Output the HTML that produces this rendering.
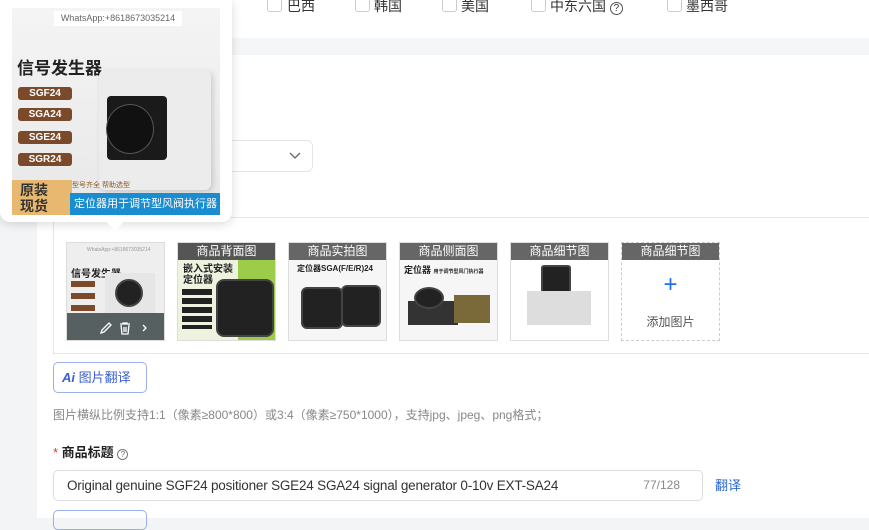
<!DOCTYPE html>
<html><head><meta charset="utf-8"><style>
*{box-sizing:border-box;margin:0;padding:0}
body{width:869px;height:518px;overflow:hidden;background:#f3f4f6;font-family:"Liberation Sans","Noto Sans CJK SC",sans-serif;position:relative;color:#333}
.abs{position:absolute}
.top{left:0;top:0;width:869px;height:38px;background:#fff}
.band{left:0;top:38px;width:869px;height:17px;background:#f4f6f8}
.card{left:37px;top:55px;width:832px;height:463px;background:#fff}
.cb{top:-3px;width:15px;height:15px;border:1px solid #ccc;border-radius:3px;background:#fff}
.cbt{top:-4px;font-size:14px;color:#333}
.sel{left:150px;top:140px;width:163px;height:32px;border:1px solid #e3e5e8;border-radius:6px;background:#fff}
.imgbox{left:53px;top:217px;width:816px;height:137px;border:1px solid #e6e6e6;border-right:none}
.th{top:242px;width:99px;height:99px;border:1px solid #ddd;background:#f2f2f2;overflow:hidden}
.lab{position:absolute;left:0;top:0;width:100%;height:17px;background:#666;color:#fff;font-size:12px;text-align:center;line-height:17px}
.dial{position:absolute;border-radius:50%;background:#222;border:2px solid #444}
</style></head><body>
<div class="abs top"></div>
<div class="abs cb" style="left:267px"></div><div class="abs cbt" style="left:287px">巴西</div>
<div class="abs cb" style="left:355px"></div><div class="abs cbt" style="left:374px">韩国</div>
<div class="abs cb" style="left:442px"></div><div class="abs cbt" style="left:461px">美国</div>
<div class="abs cb" style="left:531px"></div><div class="abs cbt" style="left:550px">中东六国 <span style="display:inline-block;width:13px;height:13px;border:1px solid #555;border-radius:50%;font-size:10px;line-height:11px;text-align:center">?</span></div>
<div class="abs cb" style="left:667px"></div><div class="abs cbt" style="left:686px">墨西哥</div>
<div class="abs band"></div>
<div class="abs card"></div>
<div class="abs sel"><svg class="abs" style="left:138px;top:11px" width="12" height="8"><path d="M1 1l5 5 5-5" stroke="#666" fill="none" stroke-width="1.3"/></svg></div>
<div class="abs imgbox"></div>

<div class="abs th" style="left:66px;background:#eee">
 <div style="position:absolute;left:20px;top:4px;font-size:5px;color:#999">WhatsApp:+8618673035214</div>
 <div style="position:absolute;left:4px;top:22px;font-size:10px;font-weight:bold;color:#222">信号发生器</div>
 <div style="position:absolute;left:4px;top:38px;width:24px;height:6px;background:#7a4a2a"></div>
 <div style="position:absolute;left:4px;top:50px;width:24px;height:6px;background:#7a4a2a"></div>
 <div style="position:absolute;left:4px;top:62px;width:24px;height:6px;background:#7a4a2a"></div>
 <div style="position:absolute;left:38px;top:30px;width:50px;height:45px;background:#e6e6e6"></div>
 <div class="dial" style="left:48px;top:36px;width:28px;height:28px"></div>
 <div style="position:absolute;left:0;top:70px;width:99px;height:29px;background:rgba(60,70,70,.85)"></div>
 <svg style="position:absolute;left:32px;top:78px" width="50" height="14"><path d="M2 12l1-3 7-7 2 2-7 7z" stroke="#fff" fill="none" stroke-width="1.3"/><path d="M21 3h10M24 3v-1h4v1M22 4l1 9h6l1-9M25 6v5M27 6v5" stroke="#fff" fill="none" stroke-width="1.3"/><path d="M44 4l3 3-3 3" stroke="#fff" fill="none" stroke-width="1.3"/></svg>
</div>
<div class="abs th" style="left:177px;background:#9ccc4a"><div class="lab" style="background:#555">商品背面图</div>
 <div style="position:absolute;left:0;top:17px;width:60px;height:82px;background:#eef3e0"></div>
 <div style="position:absolute;left:5px;top:21px;font-size:10px;font-weight:bold;color:#222;line-height:11px">嵌入式安装<br>定位器</div>
 <div style="position:absolute;left:4px;top:46px;width:30px;height:40px;background:repeating-linear-gradient(#222 0 6px,transparent 6px 9px)"></div>
 <div class="dial" style="left:38px;top:36px;width:58px;height:58px;border-radius:8px"></div></div>
<div class="abs th" style="left:288px;background:#f6f6f6"><div class="lab">商品实拍图</div>
 <div style="position:absolute;left:8px;top:20px;font-size:8px;font-weight:bold;color:#222">定位器SGA(F/E/R)24</div>
 <div class="dial" style="left:12px;top:44px;width:42px;height:42px;border-radius:6px"></div>
 <div class="dial" style="left:52px;top:42px;width:40px;height:42px;border-radius:6px"></div></div>
<div class="abs th" style="left:399px;background:#f6f6f6"><div class="lab">商品侧面图</div>
 <div style="position:absolute;left:4px;top:20px;font-size:9px;font-weight:bold;color:#222">定位器 <span style="font-size:5px">用于调节型风门执行器</span></div>
 <div style="position:absolute;left:8px;top:58px;width:50px;height:24px;background:#333"></div>
 <div class="dial" style="left:14px;top:44px;width:30px;height:22px"></div>
 <div style="position:absolute;left:54px;top:52px;width:36px;height:28px;background:#7a6a3a"></div></div>
<div class="abs th" style="left:510px;background:#fff"><div class="lab">商品细节图</div>
 <div class="dial" style="left:30px;top:22px;width:30px;height:30px;border-radius:3px"></div>
 <div style="position:absolute;left:16px;top:48px;width:64px;height:34px;background:#ddd"></div></div>
<div class="abs th" style="left:621px;background:#fff;border:1px dashed #ccc"><div class="lab">商品细节图</div>
 <div style="position:absolute;left:0;top:30px;width:100%;text-align:center;color:#1a73e8;font-size:24px;line-height:24px">+</div>
 <div style="position:absolute;left:0;top:70px;width:100%;text-align:center;color:#555;font-size:12px">添加图片</div></div>

<div class="abs" style="left:53px;top:362px;width:94px;height:31px;border:1px solid #9bb0e6;border-radius:5px;font-size:13px;color:#3a5fcf;line-height:29px;padding-left:8px"><b style="font-style:italic">Ai</b> 图片翻译</div>
<div class="abs" style="left:53px;top:406px;font-size:12px;color:#888">图片横纵比例支持1:1（像素≥800*800）或3:4（像素≥750*1000），支持jpg、jpeg、png格式；</div>
<div class="abs" style="left:53px;top:442px;font-size:13px;color:#222;font-weight:bold"><span style="color:#e33;font-weight:normal">*</span> 商品标题 <span style="display:inline-block;width:11px;height:11px;border:1px solid #777;border-radius:50%;font-size:8px;line-height:9px;text-align:center;font-weight:normal;color:#666">?</span></div>
<div class="abs" style="left:53px;top:470px;width:650px;height:31px;border:1px solid #ddd;border-radius:5px;font-size:13.5px;letter-spacing:-0.2px;color:#333;line-height:29px;padding-left:13px">Original genuine SGF24 positioner SGE24 SGA24 signal generator 0-10v EXT-SA24<span style="position:absolute;right:22px;font-size:12px;color:#888;letter-spacing:0">77/128</span></div>
<div class="abs" style="left:715px;top:475px;font-size:13px;color:#2a66d0">翻译</div>
<div class="abs" style="left:53px;top:510px;width:94px;height:20px;border:1px solid #9bb0e6;border-radius:5px"></div>

<div class="abs" style="left:0;top:0;width:232px;height:222px;background:#fff;border-radius:0 0 10px 10px;box-shadow:0 2px 10px rgba(0,0,0,.15)"></div>
<div class="abs" style="left:109px;top:216px;width:12px;height:12px;background:#fff;transform:rotate(45deg)"></div>
<div class="abs" style="left:12px;top:8px;width:208px;height:207px;background:linear-gradient(#f4f4f4,#e8e8e8);overflow:hidden">
 <div style="position:absolute;left:42px;top:3px;width:128px;height:15px;background:#fff;font-size:9px;color:#666;text-align:center;line-height:15px">WhatsApp:+8618673035214</div>
 <div style="position:absolute;left:5px;top:46px;font-size:17px;font-weight:bold;color:#222">信号发生器</div>
 <div style="position:absolute;left:6px;top:79px;width:54px;height:13px;background:#7a4a2a;border-radius:3px;color:#fff;font-size:10px;font-weight:bold;text-align:center;line-height:13px">SGF24</div>
 <div style="position:absolute;left:6px;top:100px;width:54px;height:13px;background:#7a4a2a;border-radius:3px;color:#fff;font-size:10px;font-weight:bold;text-align:center;line-height:13px">SGA24</div>
 <div style="position:absolute;left:6px;top:123px;width:54px;height:13px;background:#7a4a2a;border-radius:3px;color:#fff;font-size:10px;font-weight:bold;text-align:center;line-height:13px">SGE24</div>
 <div style="position:absolute;left:6px;top:145px;width:54px;height:13px;background:#7a4a2a;border-radius:3px;color:#fff;font-size:10px;font-weight:bold;text-align:center;line-height:13px">SGR24</div>
 <div style="position:absolute;left:87px;top:62px;width:112px;height:120px;background:#ececec;border-radius:6px;box-shadow:2px 2px 6px rgba(0,0,0,.15)"></div>
 <div style="position:absolute;left:95px;top:88px;width:60px;height:64px;background:#1a1a1a;border-radius:4px"></div>
 <div style="position:absolute;left:94px;top:96px;width:48px;height:50px;border-radius:50%;background:#111;border:1px solid #555"></div>
 <div style="position:absolute;left:0;top:172px;width:60px;height:35px;background:#e8b870;font-size:14px;font-weight:bold;color:#333;line-height:16px;padding:2px 0 0 8px">原装<br>现货</div>
 <div style="position:absolute;left:58px;top:185px;width:150px;height:22px;background:#1a8cd0;color:#fff;font-size:11px;line-height:22px;padding-left:4px">定位器用于调节型风阀执行器</div>
 <div style="position:absolute;left:60px;top:172px;font-size:7px;color:#8a5a20">型号齐全 帮助选型</div>
</div>
</body></html>
